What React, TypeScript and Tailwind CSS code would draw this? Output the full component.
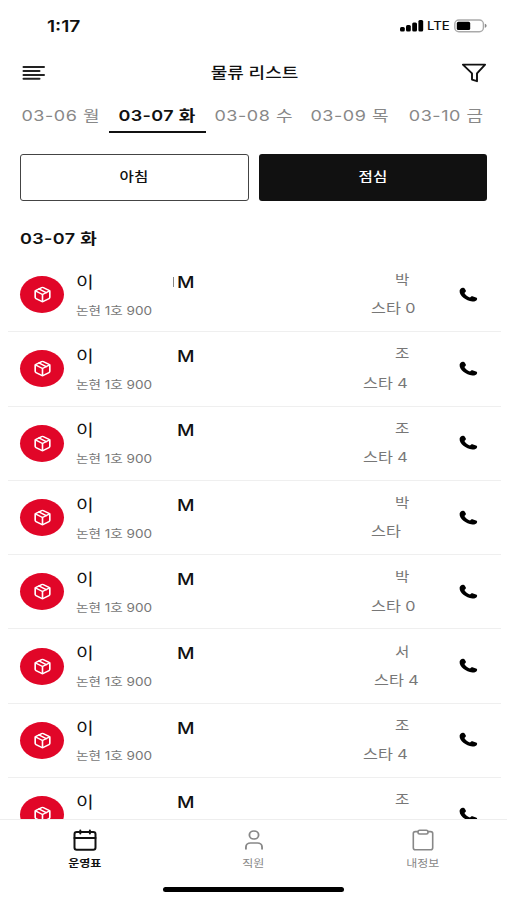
import { User } from "lucide-react";
import { FiPackage } from "react-icons/fi";
import clsx from "clsx";
import type { ReactNode } from "react";

const DAYS = ["03-06 월", "03-07 화", "03-08 수", "03-09 목", "03-10 금"];

interface Delivery {
    id: number;
    mark?: boolean;
    address?: string;
    driver: string;
    store?: string;
    storeClass?: string;
}

const DELIVERIES: Delivery[] = [
    { id: 1, mark: true, address: "논현 1호 900", driver: "박", store: "스타 0", storeClass: "ml-2" },
    { id: 2, address: "논현 1호 900", driver: "조", store: "스타 4" },
    { id: 3, address: "논현 1호 900", driver: "조", store: "스타 4" },
    { id: 4, address: "논현 1호 900", driver: "박", store: "스타", storeClass: "ml-2" },
    { id: 5, address: "논현 1호 900", driver: "박", store: "스타 0", storeClass: "ml-2" },
    { id: 6, address: "논현 1호 900", driver: "서", store: "스타 4", storeClass: "ml-[11px]" },
    { id: 7, address: "논현 1호 900", driver: "조", store: "스타 4" },
    { id: 8, driver: "조" },
];

// Extended lettering used by all labels
function Wide({ children, className }: { children: ReactNode; className?: string }) {
    return <span className={clsx("inline-block whitespace-nowrap scale-x-[1.2]", className)}>{children}</span>;
}

function StatusBar() {
    return (
        <div className="flex h-[52px] shrink-0 items-center justify-between pl-[47px] pr-[20px]">
            <Wide className="origin-left text-[16px] font-semibold">1:17</Wide>
            <div className="flex items-center">
                <svg width="24" height="12" viewBox="0 0 24 12" className="mr-[3px]">
                    <rect x="0" y="7" width="4.8" height="4.5" rx="1.5" />
                    <rect x="6" y="5" width="4.8" height="6.5" rx="1.5" />
                    <rect x="12.2" y="2.5" width="4.8" height="9" rx="1.5" />
                    <rect x="18.4" y="0" width="4.8" height="11.5" rx="1.5" />
                </svg>
                <Wide className="mr-[7px] origin-left scale-x-[1.15] text-[11.5px] font-medium">LTE</Wide>
                <svg width="33" height="14" viewBox="0 0 33 14">
                    <rect x="0.8" y="1" width="28.6" height="11.8" rx="4" fill="none" stroke="#aaa" strokeWidth="1.4" />
                    <rect x="2.8" y="2.8" width="13.4" height="8.2" rx="1.6" />
                    <path d="M30.8 4.8c2.4.7 2.4 3.4 0 4z" fill="#888" />
                </svg>
            </div>
        </div>
    );
}

function Header() {
    return (
        <header className="grid h-[42px] shrink-0 grid-cols-[1fr_auto_1fr] items-center pl-[22px] pr-[20px]">
            <svg width="24" height="16" viewBox="0 0 24 16" stroke="#222" strokeWidth="2" strokeLinecap="round">
                <path d="M1.5 2H22M1.5 5.9H17.5M1.5 9.9H22M1.5 13.8H17.5" />
            </svg>
            <Wide className="text-[15px] font-medium">물류 리스트</Wide>
            <svg width="26" height="20" viewBox="0 0 26 20" fill="none" stroke="#111" strokeWidth="1.9" strokeLinejoin="round" className="justify-self-end">
                <path d="M1.9 1.6H24.1L16 10.4V18.2L11 16.6V10.4Z" />
            </svg>
        </header>
    );
}

function PhoneIcon() {
    return (
        <svg width="19" height="15" viewBox="0 0 19 15" className="-mt-px">
            <path d="M.6 3.8C.8 2.2 2.1.9 3.9.7 4.8.6 5.4 1 5.8 1.7L6.7 3.3C7.1 4.1 6.9 4.8 6.2 5.3L5.4 5.9C6.5 8 8.6 9.7 11 10.5L11.9 9.8C12.5 9.3 13.3 9.2 14.1 9.5L17 10.5C18 10.9 18.4 11.6 18 12.4 17.3 13.9 15.4 14.7 13.4 14.5 6.8 13.7.3 9 .6 3.8Z" />
        </svg>
    );
}

function CalendarIcon() {
    return (
        <svg width="26" height="24" viewBox="0 0 26 24" fill="none" stroke="currentColor" strokeWidth="2" strokeLinecap="round">
            <rect x="2.5" y="4" width="21" height="17.8" rx="2.2" />
            <path d="M2.5 10H23.5M8.3 2.4V5.6M17.9 2.4V5.6" />
        </svg>
    );
}

function ClipboardIcon() {
    return (
        <svg width="26" height="24" viewBox="0 0 26 24" fill="none" stroke="currentColor" strokeWidth="1.6">
            <path d="M8 3.6H5.3Q3.3 3.6 3.3 5.6V19.8Q3.3 21.8 5.3 21.8H20.7Q22.7 21.8 22.7 19.8V5.6Q22.7 3.6 20.7 3.6H18" />
            <rect x="8" y="2.2" width="10" height="3.8" rx="1.7" />
        </svg>
    );
}

function DeliveryRow({ item }: { item: Delivery }) {
    return (
        <li className="ml-2 mr-[6px] flex h-[74.3px] shrink-0 items-center border-b border-[#efefef] pl-3">
            <div className="flex h-[37px] w-[44px] items-center justify-center rounded-[50%] bg-[#e10628]">
                <FiPackage className="size-[17px] scale-x-[1.15] text-white" />
            </div>
            <div className="ml-[12px] w-[287px] pt-[4px]">
                <div className="flex h-[28px] items-center text-[16px]">
                    <Wide className="w-[97px] origin-left">이</Wide>
                    <span className={clsx("mr-[1px] h-[10px] w-px", item.mark && "bg-[#888]")} />
                    <Wide className="ml-[2px] origin-left font-medium">M</Wide>
                </div>
                <div className="flex h-[29px] items-center pt-px text-[11.5px] text-[#777]">
                    {item.address && <Wide className="origin-left scale-x-[1.18]">{item.address}</Wide>}
                </div>
            </div>
            <div className="w-[96px] text-[#777]">
                <div className="flex h-[28px] items-center pl-[32px] text-[13px]">
                    <Wide className="origin-left">{item.driver}</Wide>
                </div>
                <div className="flex h-[30px] items-center pt-px text-[13.5px]">
                    {item.store && <Wide className={clsx("origin-left", item.storeClass)}>{item.store}</Wide>}
                </div>
            </div>
            <PhoneIcon />
        </li>
    );
}

function TabBar() {
    return (
        <nav className="flex h-[81px] shrink-0 flex-col border-t border-[#eee] bg-white">
            <div className="grid h-[60px] grid-cols-3 text-[10px] text-[#888]">
                <div className="flex flex-col items-center pt-[8px] font-semibold text-[#111]">
                    <CalendarIcon />
                    <Wide className="mt-[5px]">운영표</Wide>
                </div>
                <div className="flex flex-col items-center pt-[8px]">
                    <User className="size-[24px] scale-x-[1.15]" strokeWidth={1.6} />
                    <Wide className="mt-[5px]">직원</Wide>
                </div>
                <div className="flex flex-col items-center pt-[8px]">
                    <ClipboardIcon />
                    <Wide className="mt-[5px]">내정보</Wide>
                </div>
            </div>
            <div className="mx-auto mt-[7px] h-[5px] w-[181px] rounded-full bg-black" />
        </nav>
    );
}

export default function App() {
    return (
        <div className="flex h-[900px] w-[507px] flex-col overflow-hidden bg-white font-['Inter','Noto_Sans_CJK_KR',sans-serif] leading-[1.3] text-[#111]">
            <StatusBar />
            <Header />

            {/* Days */}
            <div className="flex h-[39px] shrink-0 pl-[13px] text-[15px] tracking-[0.45px]">
                {DAYS.map((day, i) => (
                    <div
                        key={day}
                        className={clsx(
                            "flex w-[96.3px] shrink-0 items-center justify-center border-b-2 pt-[6px]",
                            i === 1 ? "border-[#111] font-semibold tracking-[0.3px]" : "border-transparent text-[#888]"
                        )}
                    >
                        <Wide>{day}</Wide>
                    </div>
                ))}
            </div>

            {/* Morning / lunch */}
            <div className="mt-[21px] grid h-[47px] shrink-0 grid-cols-2 gap-[10px] px-[20px] text-[13px] font-medium">
                <button className="rounded-[3px] border-[1.5px] border-[#444] pb-[2px]">
                    <Wide>아침</Wide>
                </button>
                <button className="rounded-[3px] bg-[#111] pb-[2px] text-white">
                    <Wide>점심</Wide>
                </button>
            </div>

            <div className="flex h-[57px] shrink-0 items-center pl-[20px] pt-[18px] text-[15px] font-semibold tracking-[0.3px]">
                <Wide className="origin-left">03-07 화</Wide>
            </div>

            <ul className="flex min-h-0 flex-1 flex-col overflow-hidden">
                {DELIVERIES.map((item) => (
                    <DeliveryRow key={item.id} item={item} />
                ))}
            </ul>
            <TabBar />
        </div>
    );
}
